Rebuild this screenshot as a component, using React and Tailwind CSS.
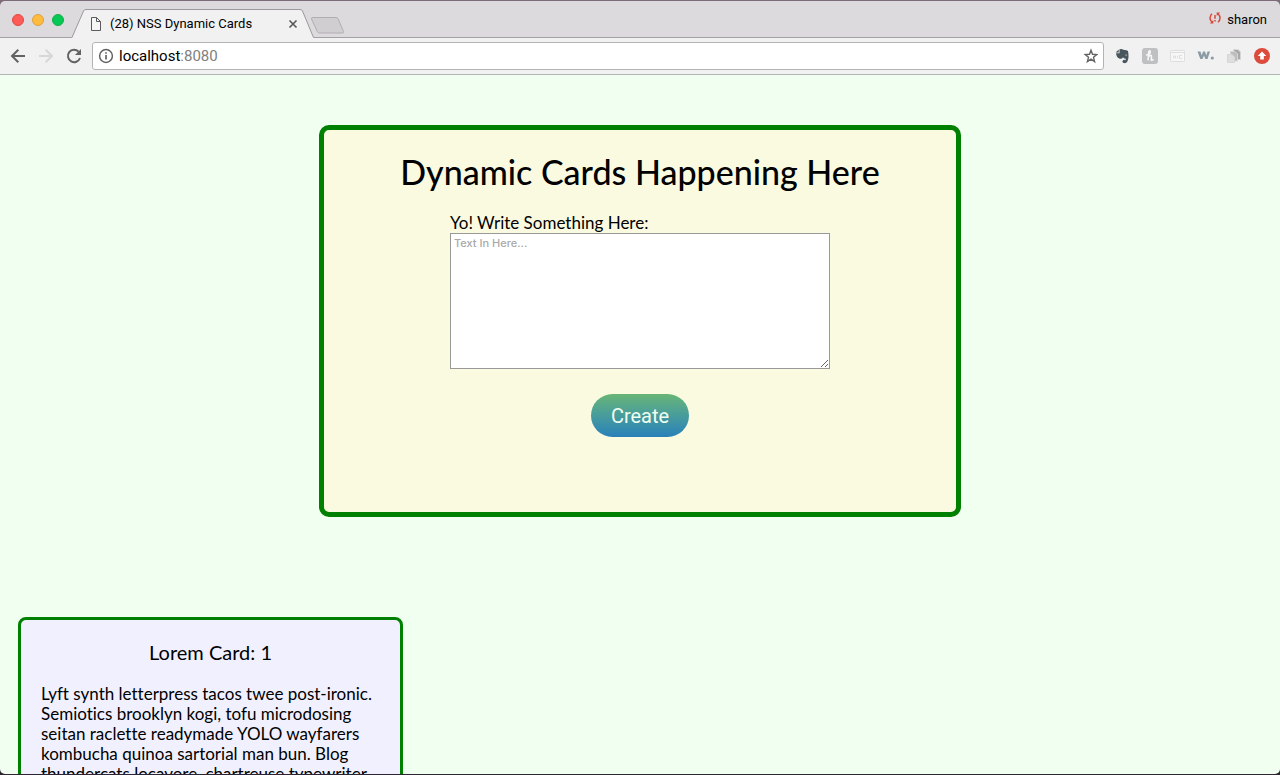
import React from "react";

const cards = [
  {
    id: 1,
    text: [
      "Lyft synth letterpress tacos twee post-ironic.",
      "Semiotics brooklyn kogi, tofu microdosing",
      "seitan raclette readymade YOLO wayfarers",
      "kombucha quinoa sartorial man bun. Blog",
      "thundercats locavore, chartreuse typewriter",
    ],
  },
];

function TabStrip() {
  return (
    <div className="relative flex h-[37px] shrink-0 items-end bg-[#dcdadc] font-['Roboto',sans-serif]">
      <div className="absolute inset-x-0 bottom-0 h-px bg-[#a3a1a3]" />
      <div className="flex h-full w-[72px] items-center gap-2 pl-3">
        <button aria-label="Close window" className="size-3 rounded-full border border-[#e2463f] bg-[#fc5b57]" />
        <button aria-label="Minimize window" className="size-3 rounded-full border border-[#e0a03a] bg-[#fdbc40]" />
        <button aria-label="Zoom window" className="size-3 rounded-full border border-[#12ac4a] bg-[#06c855]" />
      </div>
      <div className="relative h-[29px] w-[242px]">
        <svg className="absolute inset-0" width="242" height="29" viewBox="0 0 242 29" aria-hidden="true">
          <path d="M0 28.5 L11.5 2 Q12.3 .5 14 .5 H228 Q229.700 .5 230.500 2 L241.500 28.500 V29 H0Z" fill="#f2f1f2" />
          <path d="M0 28.5 L11.5 2 Q12.3 .5 14 .5 H228 Q229.700 .5 230.500 2 L241.500 28.500" fill="none" stroke="#9b999b" />
        </svg>
        <div className="relative flex h-full items-center pr-4 pl-[18px]">
          <svg width="12" height="16" viewBox="0 0 12 16" fill="none" stroke="#5b5b5b" aria-hidden="true">
            <path d="M1.500 1.500 H6.500 L10.500 5.500 V14.500 H1.500Z M6.500 1.500 V5.500 H10.500" fill="#f7f7f7" />
          </svg>
          <span className="ml-2 flex-1 whitespace-nowrap text-[13px] leading-4 text-black">(28) NSS Dynamic Cards</span>
          <button aria-label="Close tab">
            <svg width="10" height="10" viewBox="0 0 10 10" stroke="#5a5a5a" strokeWidth="1.700">
              <path d="M1.500 1.500 L8.500 8.500 M8.500 1.500 L1.500 8.500" />
            </svg>
          </button>
        </div>
      </div>
      <button aria-label="New tab" className="mb-1 -ml-1">
        <svg width="35" height="17" viewBox="0 0 35 17" fill="#d0ced0" stroke="#b0aeb0">
          <path d="M3 .5 H26 Q27.500 .5 28.200 2 L33.500 14.500 Q34 16 32.500 16 H9.500 Q8 16 7.300 14.500 L1.500 2 Q1 .5 3 .5Z" />
        </svg>
      </button>
      <button className="ml-auto flex h-full items-center gap-[5px] pt-px pr-[13px] text-[13px] text-black">
        <svg className="mb-1" width="14" height="14" viewBox="0 0 14 14" fill="none" stroke="#d8493c" strokeWidth="1.500" aria-hidden="true">
          <path d="M4 2.800 Q2 4.500 2 7 Q2 9.300 3.800 11" />
          <path d="M10 11.200 Q12 9.500 12 7 Q12 4.700 10.200 3" />
          <path d="M1.800 12.500 H5.300 V9Z M12.200 1.500 H8.700 V5Z" fill="#d8493c" stroke="none" />
          <path d="M7 4 V7.800 M7 9 V10.500" />
        </svg>
        <span>sharon</span>
      </button>
    </div>
  );
}

function Toolbar() {
  return (
    <div className="flex h-[37px] shrink-0 items-center border-b border-[#b5b4b5] bg-[#f2f1f2] pr-[9px] pl-2 font-['Roboto',sans-serif]">
      <div className="flex items-center gap-2">
        <button aria-label="Back">
          <svg width="20" height="20" viewBox="0 0 20 20" fill="none" stroke="#636363" strokeWidth="2"><path d="M17 10 H4 M10.300 3.700 L4 10 L10.300 16.300" /></svg>
        </button>
        <button aria-label="Forward">
          <svg width="20" height="20" viewBox="0 0 20 20" fill="none" stroke="#d8d7d8" strokeWidth="2"><path d="M3 10 H16 M9.700 3.700 L16 10 L9.700 16.300" /></svg>
        </button>
        <button aria-label="Reload">
          <svg width="20" height="20" viewBox="0 0 20 20" fill="none" stroke="#636363" strokeWidth="2">
            <path d="M14.600 5.600 A6.200 6.200 0 1 0 16 12" />
            <path d="M17 3 V9 H11Z" fill="#636363" stroke="none" />
          </svg>
        </button>
      </div>
      <div className="ml-2 flex h-7 min-w-0 flex-1 items-center rounded-[3px] border border-[#b5b4b5] bg-white px-[5px]">
        <svg width="16" height="16" viewBox="0 0 16 16" fill="none" stroke="#636363" strokeWidth="1.500" aria-hidden="true">
          <circle cx="8" cy="8" r="6.400" />
          <path d="M8 7 V11.500 M8 4.200 V5.800" strokeWidth="1.700" />
        </svg>
        <a href="#page" className="ml-[5px] text-[15px] leading-5 text-black">localhost<span className="text-[#808080]">:8080</span></a>
        <button aria-label="Bookmark this page" className="ml-auto">
          <svg width="16" height="16" viewBox="0 0 16 16" fill="none" stroke="#636363" strokeWidth="1.400">
            <path d="M9 2.200 L10.500 6.300 L14.800 6.600 L11.500 9.300 L12.600 13.600 L9 11.200 L5.400 13.600 L6.500 9.300 L3.200 6.600 L7.500 6.300Z" />
          </svg>
        </button>
      </div>
      <div className="ml-[9px] flex items-center gap-[10px]">
        <button aria-label="Evernote">
          <svg width="18" height="18" viewBox="0 0 18 18">
            <path d="M6.500 2.200 Q9 1.500 10.300 2.700 Q14.500 2.700 15 4.300 Q16.300 10 14.500 14.300 Q13 17 10 15.800 Q8.500 14.300 10.300 12.900 Q12 12.300 12.200 13.500 L13 11.700 Q10.700 11.700 10.100 10.200 Q9 12.200 6.800 11.700 Q3.500 11 3 6.300 H6.500Z" fill="#48575d" />
            <path d="M5.700 2.500 V5.500 H2.700Z" fill="#48575d" />
            <path d="M12 8.200 Q13.200 6.800 14.100 8.500Z" fill="#f2f1f2" />
          </svg>
        </button>
        <button aria-label="Honey">
          <svg width="18" height="18" viewBox="0 0 18 18">
            <rect x="1" y="1" width="16" height="16" rx="3" fill="#bfc0c1" />
            <path d="M5 8 Q9.500 7.500 9.300 4.700 Q8.500 2.800 7.700 5 L7 13.500 M7.300 10 Q10.800 6.500 10.500 10 L10.200 13 Q11.500 13.800 12.500 12" stroke="#f7f7f7" strokeWidth="1.500" fill="none" />
          </svg>
        </button>
        <button aria-label="Window panel">
          <svg width="18" height="18" viewBox="0 0 18 18" fill="none" stroke="#dedede">
            <rect x="1.500" y="3.500" width="14" height="11" rx="1" fill="#f7f7f7" />
            <path d="M2 5.500 H15 M4.500 8.500 V11.500 M6.500 8.500 V11.500 M4.500 10 H6.500 M8.500 8.500 V11.500 M13 8.500 H10.500 V11.500 H13" />
          </svg>
        </button>
        <button aria-label="Wappalyzer">
          <svg width="18" height="18" viewBox="0 0 18 18">
            <path d="M.5 4.500 H3.500 L4.700 8.500 L6 4.500 H8 L9.300 8.500 L10.500 4.500 H13 L10.500 12 H8.300 L7 8.500 L5.500 12 H3.300Z" fill="#8a9ba3" />
            <circle cx="15.300" cy="11" r="1.600" fill="#8a9ba3" />
          </svg>
        </button>
        <button aria-label="Pages">
          <svg width="18" height="18" viewBox="0 0 18 18" stroke="#d6d6d6">
            <path d="M8.500 2.500 H13 L15.500 5 V12.500 H8.500Z" fill="#a9a9a9" />
            <path d="M5.500 4.500 H10 L12.500 7 V14 H5.500Z" fill="#bdbdbd" />
            <path d="M2.500 7.500 H7 L9.500 10 V15.500 H2.500Z" fill="#dedede" />
          </svg>
        </button>
        <button aria-label="Update">
          <svg width="18" height="18" viewBox="0 0 18 18">
            <circle cx="9" cy="9" r="8" fill="#dc4b3b" />
            <path d="M9 4.500 L13.300 9 H10.800 V12.500 H7.200 V9 H4.700Z" fill="#fff" />
          </svg>
        </button>
      </div>
    </div>
  );
}

function CardForm() {
  return (
    <form
      onSubmit={(event) => event.preventDefault()}
      className="mx-auto flex w-full max-w-[642px] flex-col items-center rounded-[10px] border-[5px] border-[#008000] bg-[#fafae1] pt-5 pb-[75px]"
    >
      <h1 className="text-[34px] leading-[43px] font-medium">Dynamic Cards Happening Here</h1>
      <div className="mt-5 flex w-[380px] max-w-full flex-col">
        <label htmlFor="card-text" className="text-[17px] leading-5">Yo! Write Something Here:</label>
        <textarea
          id="card-text"
          placeholder="Text In Here..."
          className="h-[136px] resize border border-[#999] bg-white px-[3px] py-[2px] font-['Inter',sans-serif] text-[11px] leading-[14px] font-medium placeholder:text-[#a9a9a9]"
        />
      </div>
      <button className="mt-[25px] h-[43px] rounded-full bg-linear-to-b from-[#68b575] to-[#2980b9] px-5 font-['Roboto',sans-serif] text-[20px] leading-6 text-[#f0fff0]">
        Create
      </button>
    </form>
  );
}

function Card({ id, text }) {
  return (
    <article className="w-[385px] rounded-lg border-[3px] border-[#008000] bg-[#f0f0ff] px-5 pt-5 pb-5">
      <h2 className="text-center text-[20px] leading-6">Lorem Card: {id}</h2>
      <p className="mt-5 text-[17px] leading-5">
        {text.map((line) => (
          <span key={line} className="block whitespace-nowrap">{line}</span>
        ))}
      </p>
    </article>
  );
}

export default function App() {
  return (
    <div className="h-screen overflow-hidden bg-linear-to-b from-[#7d6b78] to-[#2c2433] py-px">
      <div className="flex h-full flex-col overflow-hidden rounded-[5px]">
        <TabStrip />
        <Toolbar />
        <main id="page" className="min-h-0 flex-1 overflow-hidden bg-[#f0fff0] pt-[50px] font-['Lato',sans-serif] text-black [font-variant-ligatures:none]">
          <CardForm />
          <section className="mt-[100px] flex flex-wrap px-[18px]">
            {cards.map((card) => (
              <Card key={card.id} {...card} />
            ))}
          </section>
        </main>
      </div>
    </div>
  );
}
